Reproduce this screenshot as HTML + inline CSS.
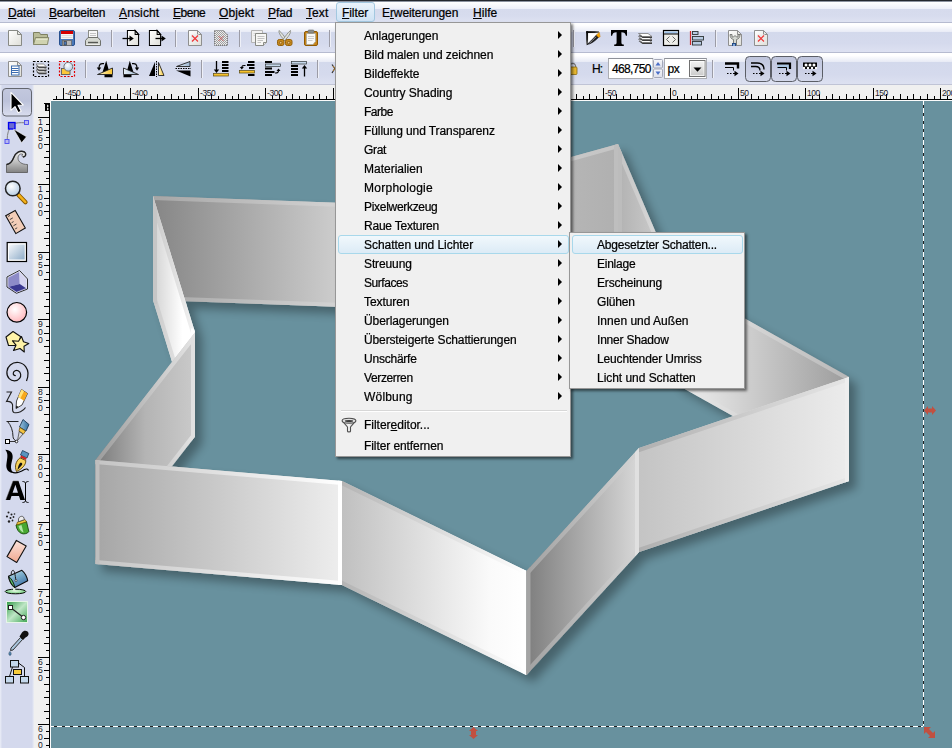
<!DOCTYPE html>
<html lang="de"><head><meta charset="utf-8"><title>Inkscape</title>
<style>
html,body{margin:0;padding:0;background:#dfe4f3;}
body{width:952px;height:748px;overflow:hidden;position:relative;font-family:"Liberation Sans",sans-serif;font-size:12px;color:#000;}
.t{position:absolute;white-space:nowrap;font-size:12px;line-height:16px;height:16px;color:#000;-webkit-text-stroke:.22px #000;}
.t u{text-decoration:underline;text-underline-offset:1px;}
.topline{position:absolute;left:0;top:0;width:952px;height:2px;background:linear-gradient(#23272e 0,#23272e 50%,#8c93a0 50%,#8c93a0 100%);}
.mb{position:absolute;left:0;top:2px;width:952px;height:20px;border-bottom:1px solid #b6bbd0;background:linear-gradient(#ffffff 0,#eef0f9 34%,#d6dbed 35%,#d7dcee 70%,#dee2f1 100%);}
.mbsel{position:absolute;left:336px;top:0;width:37px;height:18px;border:1px solid #a3c8e0;border-radius:3px;background:linear-gradient(#eaf3fb,#cfe2f4);}
.tb{position:absolute;left:0;width:952px;}
.tb1{top:23px;height:29px;border-bottom:1px solid #b6bbd0;background:linear-gradient(#ffffff 0,#ffffff 7%,#e8ebf6 31%,#d3d9ec 32%,#d5daed 70%,#dde1f1 100%);}
.tb2{top:53px;height:31px;border-bottom:1px solid #c0c4d6;background:linear-gradient(#ffffff 0,#ffffff 8%,#e8ebf6 28%,#d3d9ec 29%,#d5daed 70%,#dde1f1 100%);}
.tbx{position:absolute;left:0;top:85px;width:34px;height:663px;background:linear-gradient(90deg,#e9ecf7 0,#e2e6f3 1px,#d4d9ed 2px,#d4d9ed 32px,#e0e4f1 33px,#ebedf3 34px);}
.hr{position:absolute;left:34px;top:85px;}
.vr{position:absolute;left:34px;top:101px;}
.cv{position:absolute;left:51px;top:101px;}
.rl{font-family:"Liberation Sans",sans-serif;font-size:8.5px;letter-spacing:-.45px;fill:#1a1a2a;}
.menu{position:absolute;background:#f0f0f0;border:1px solid #979797;box-shadow:2px 2px 2.5px rgba(0,0,0,.52);}
.hl{position:absolute;border:1px solid #a8d8eb;border-radius:3px;background:linear-gradient(#f1f8fc,#dcebf6);}
.ar{position:absolute;width:0;height:0;border-left:4.5px solid #000;border-top:4px solid transparent;border-bottom:4px solid transparent;}
.sep{position:absolute;height:1px;background:#d7d7d7;border-bottom:1px solid #fff;}
.ic{position:absolute;}
</style></head>
<body>
<div class="topline"></div>
<div class="mb"><div class="mbsel"></div><span class="t" style="left:8px;top:3px;letter-spacing:-0.146px;"><u>D</u>atei</span><span class="t" style="left:49px;top:3px;letter-spacing:-0.176px;"><u>B</u>earbeiten</span><span class="t" style="left:119px;top:3px;letter-spacing:0.132px;"><u>A</u>nsicht</span><span class="t" style="left:173px;top:3px;letter-spacing:-0.484px;"><u>E</u>bene</span><span class="t" style="left:219px;top:3px;letter-spacing:0.099px;"><u>O</u>bjekt</span><span class="t" style="left:268px;top:3px;letter-spacing:-0.101px;"><u>P</u>fad</span><span class="t" style="left:306px;top:3px;letter-spacing:0.071px;"><u>T</u>ext</span><span class="t" style="left:342px;top:3px;letter-spacing:-0.065px;"><u>F</u>ilter</span><span class="t" style="left:382px;top:3px;letter-spacing:-0.085px;">E<u>r</u>weiterungen</span><span class="t" style="left:473px;top:3px;letter-spacing:0.057px;"><u>H</u>ilfe</span></div>
<div class="tb tb1"></div>
<div class="tb tb2"></div>
<div class="tbx"></div>
<svg class="ic" style="left:0;top:24px" width="952" height="61" viewBox="0 24 952 61"><defs>
<linearGradient id="dg" x1="0" y1="0" x2="1" y2="1"><stop offset="0" stop-color="#fff"/><stop offset="1" stop-color="#deded8"/></linearGradient>
<linearGradient id="fsg" x1="0" y1="0" x2="1" y2="1"><stop offset="0" stop-color="#fff"/><stop offset=".45" stop-color="#eee"/><stop offset=".75" stop-color="#555"/><stop offset="1" stop-color="#000"/></linearGradient>
<pattern id="chk" width="2" height="2" patternUnits="userSpaceOnUse"><rect width="2" height="2" fill="#ececec"/><rect width="1" height="1" fill="#a0a0a0"/><rect x="1" y="1" width="1" height="1" fill="#a0a0a0"/></pattern>
<g id="doc"><path d="M.5 .5H9.5L13.5 4.5V15.5H.5Z" fill="url(#dg)"/><path d="M9.5 .5V4.5H13.5Z" fill="#e6e6e2"/></g>
<g id="sep"><rect x="0" y="0" width="1" height="17" fill="#9c9ca6"/><rect x="1" y="0" width="1" height="17" fill="#eef0f8"/></g>
</defs>
<!-- new -->
<g transform="translate(8 30)"><use href="#doc" stroke="#888a85"/></g>
<!-- open -->
<path d="M33.5 44.5V32.5H39.5L40.5 34.5H47.5V38" fill="#b9bc98" stroke="#7d8061"/>
<path d="M33.5 44.5L35.5 37.5H48.7L47.5 44.5Z" fill="#d0d3b0" stroke="#86896a"/>
<path d="M36 39.5H47.5" stroke="#e2e4cc" stroke-width="1"/>
<!-- save -->
<rect x="59.5" y="30.5" width="15" height="15" rx="1.5" fill="#4a78b8" stroke="#27508f"/>
<rect x="61" y="31" width="12" height="3" fill="#d40000"/>
<rect x="61" y="34" width="12" height="5" fill="#f4f4f4"/>
<path d="M61.5 35.5H72.5M61.5 37.5H72.5" stroke="#d8d8d8" stroke-width=".8"/>
<rect x="62.5" y="40.5" width="9" height="5" fill="#b8b8b8" stroke="#6a6a6a" stroke-width=".8"/>
<rect x="64" y="41.5" width="2.5" height="3.5" fill="#4a78b8" stroke="#333" stroke-width=".6"/>
<!-- print -->
<rect x="88.5" y="30.5" width="9" height="8" fill="#f8f8f8" stroke="#8b8d88"/>
<path d="M90 33.5H96M90 35.5H96" stroke="#c4c4c4" stroke-width="1"/>
<path d="M85.500 45.500V40.5L88 37.5H98L100.500 40.5V45.500Z" fill="#d6d9d2" stroke="#6f716c"/>
<path d="M88 42.5H98" stroke="#555753" stroke-width="1.4"/>
<path d="M86.500 44.500H99.500" stroke="#f2f2f0" stroke-width=".8"/>
<use href="#sep" x="111" y="30"/>
<!-- import -->
<g transform="translate(127 30) scale(.857 1)"><use href="#doc" stroke="#000" stroke-width="1.2"/></g>
<path d="M122.500 38.500H131" stroke="#000" stroke-width="1.3"/><path d="M129.500 35.500L133.800 38.500L129.500 41.500Z" fill="#000"/>
<!-- export -->
<g transform="translate(149 30) scale(.857 1)"><use href="#doc" stroke="#000" stroke-width="1.2"/></g>
<path d="M155.500 38.500H163" stroke="#000" stroke-width="1.3"/><path d="M161.500 35.500L165.800 38.500L161.500 41.500Z" fill="#000"/>
<use href="#sep" x="175" y="30"/>
<!-- doc red x -->
<g transform="translate(188 30)"><use href="#doc" stroke="#8f8f8f"/><rect x="3" y="4.500" width="8" height="8" fill="#e9e9e9"/><path d="M4 5.500L10 11.500M10 5.500L4 11.500" stroke="#f03535" stroke-width="1.150"/></g>
<!-- dotted doc -->
<g transform="translate(214 30)"><path d="M.5 .5H9.5L13.500 4.500V15.500H.5Z" fill="url(#chk)" stroke="#6a6a6a" stroke-dasharray="1 1"/><path d="M4.500 6L9.500 11M9.500 6L4.500 11" stroke="#c44" stroke-width="1" opacity=".7"/></g>
<use href="#sep" x="239" y="30"/>
<!-- copy -->
<path d="M251.500 30.500H262.500V42.500H251.500Z" fill="#f1f1f1" stroke="#b4b4b4"/>
<path d="M253.500 33.500H260M253.500 35.500H260" stroke="#d6d6d6"/>
<path d="M255.500 33.500H266.500V42.500L263.500 45.500H255.500Z" fill="#f7f7f5" stroke="#888a85"/>
<path d="M257.500 36.500H264.500M257.500 38.500H264.500M257.500 40.500H263M257.500 42.500H261" stroke="#c2c2c2" stroke-width="1"/>
<path d="M266.500 42.500H263.500V45.500" fill="#ddd" stroke="#888a85"/>
<!-- scissors -->
<path d="M279 30.500C278.500 33 281 37 285.500 41L286.500 39.500C284 36 281.500 32.500 279 30.500Z" fill="#dfe1dc" stroke="#8a8c87" stroke-width=".9"/>
<path d="M290.500 30.500C291 33 288.500 37 284 41L283 39.500C285.500 36 288 32.500 290.500 30.500Z" fill="#dfe1dc" stroke="#8a8c87" stroke-width=".9"/>
<rect x="277.500" y="39.500" width="6.500" height="6" rx="1.800" fill="#c88a1c" stroke="#94600a"/>
<rect x="285.500" y="39.500" width="6.500" height="6" rx="1.800" fill="#c88a1c" stroke="#94600a"/>
<circle cx="280.700" cy="42.700" r="1.300" fill="#e9c07a" stroke="#7d4f05" stroke-width=".7"/>
<circle cx="288.700" cy="42.700" r="1.300" fill="#e9c07a" stroke="#7d4f05" stroke-width=".7"/>
<!-- clipboard -->
<rect x="304.500" y="31.500" width="13" height="14" rx="1.500" fill="#c8861a" stroke="#8f5902"/>
<path d="M306.500 33.500H315.500V41.500L313 44.500H306.500Z" fill="#f9f9f7" stroke="#a8a8a0" stroke-width=".8"/>
<path d="M308 36.500H314M308 38.500H314M308 40.500H312.500" stroke="#c6c6c6" stroke-width=".9"/>
<rect x="308" y="30" width="6" height="3" rx="1" fill="#8c8e89" stroke="#666" stroke-width=".6"/>
<use href="#sep" x="329" y="30"/>
<use href="#sep" x="573" y="30"/>
<!-- fill & stroke -->
<defs><linearGradient id="fs1" gradientUnits="userSpaceOnUse" x1="586" y1="0" x2="600" y2="0"><stop offset="0" stop-color="#000"/><stop offset=".6" stop-color="#222"/><stop offset="1" stop-color="#888"/></linearGradient>
<linearGradient id="fs2" gradientUnits="userSpaceOnUse" x1="0" y1="31" x2="0" y2="45"><stop offset="0" stop-color="#000"/><stop offset=".6" stop-color="#222"/><stop offset="1" stop-color="#888"/></linearGradient></defs>
<path d="M586.500 31.500H599.500L586.500 44.500Z" fill="#fff"/>
<path d="M586.300 32.100H599" stroke="url(#fs1)" stroke-width="1.900"/>
<path d="M587.100 31.300V44.500" stroke="url(#fs2)" stroke-width="1.900"/>
<path d="M586.800 44.600C589 43 592 40 596.500 35L598.800 37C594.500 41.500 591 44 586.800 44.600Z" fill="#222" stroke="#000" stroke-width=".6"/>
<path d="M589.500 43C591.500 41.500 593.500 39.500 596 36.800" fill="none" stroke="#9a9a9a" stroke-width=".9"/>
<path d="M596.300 35.200L599.300 32.200L600.200 36.800L598.600 37.400Z" fill="#f7a500" stroke="#c07000" stroke-width=".4"/>
<!-- T -->
<path d="M611 30H627V35.800H625.900C625.400 33.300 624.200 32.300 621.400 32.300V42.500C621.400 44 622.100 44.500 623.800 44.600V46H614.200V44.600C615.900 44.500 616.600 44 616.600 42.500V32.300C613.800 32.300 612.600 33.300 612.100 35.800H611Z" fill="#000"/>
<!-- layers -->
<path d="M638.5 41.1L642.5 44.1H652.0V42.5Z" fill="#3c3c3c"/><path d="M638.5 39.5H648.0L652.0 42.5H642.5Z" fill="#fdfdfd" stroke="#6a6a6a" stroke-width=".7"/><path d="M638.5 38.1L642.5 41.1H652.0V39.5Z" fill="#3c3c3c"/><path d="M638.5 36.5H648.0L652.0 39.5H642.5Z" fill="#fdfdfd" stroke="#6a6a6a" stroke-width=".7"/><path d="M638.5 35.1L642.5 38.1H652.0V36.5Z" fill="#3c3c3c"/><path d="M638.5 33.5H648.0L652.0 36.5H642.5Z" fill="#fdfdfd" stroke="#6a6a6a" stroke-width=".7"/>
<!-- xml -->
<rect x="663.500" y="30.500" width="15" height="15" fill="#eeeeea" stroke="#000" stroke-width="1.200"/>
<rect x="664.500" y="31.500" width="13" height="2" fill="#9cc0e8"/><path d="M664 34H678" stroke="#000" stroke-width="1"/>
<path d="M669.500 36.500L666.500 39.500L669.500 42.500M672.500 36.500L675.500 39.500L672.500 42.500" fill="none" stroke="#555" stroke-width=".9"/>
<!-- align -->
<path d="M690.500 31V45" stroke="#d02828" stroke-width="1.200"/>
<g fill="#b8cbe2" stroke="#2e3436" stroke-width=".9"><rect x="692.500" y="31.500" width="5.500" height="3"/><rect x="692.500" y="36.500" width="11" height="3.500"/><rect x="692.500" y="41.500" width="9" height="3.500"/></g>
<use href="#sep" x="715" y="30"/>
<!-- wrench doc -->
<g transform="translate(728 30)"><use href="#doc" stroke="#8f8f8f"/>
<path d="M2 4.500C2 7.500 3.500 9 5.500 9.500V15H8.500V9.500C10.500 9 12 7.500 12 4.500H10V7H8.500L7 5.500L5.500 7H4V4.500Z" fill="#d5d8d2" stroke="#70726e" stroke-width=".9"/>
<rect x="4" y="13" width="4" height="3" fill="#204a87"/><rect x="5.200" y="14" width="1.600" height="2" fill="#9bbbe6"/></g>
<!-- doc red x 2 -->
<g transform="translate(754 30)"><use href="#doc" stroke="#8f8f8f"/><rect x="3" y="4.500" width="8" height="8" fill="#e9e9e9"/><path d="M4 5.500L10 11.500M10 5.500L4 11.500" stroke="#f03535" stroke-width="1.150"/></g>
<defs>
<linearGradient id="yg" x1="0" y1="0" x2="1" y2="0"><stop offset="0" stop-color="#fff6c8"/><stop offset="1" stop-color="#f7c431"/></linearGradient>
<linearGradient id="bg2" x1="0" y1="0" x2="1" y2="0"><stop offset="0" stop-color="#e8f0f7"/><stop offset="1" stop-color="#9db7d3"/></linearGradient>
<linearGradient id="btn" x1="0" y1="0" x2="0" y2="1"><stop offset="0" stop-color="#bfc5dc"/><stop offset=".5" stop-color="#c9cee4"/><stop offset="1" stop-color="#d3d8ea"/></linearGradient>
<linearGradient id="ddb" x1="0" y1="0" x2="0" y2="1"><stop offset="0" stop-color="#f4f4f4"/><stop offset=".5" stop-color="#e0e0e0"/><stop offset="1" stop-color="#c8c8c8"/></linearGradient>
<radialGradient id="lens2" cx=".4" cy=".35" r=".7"><stop offset="0" stop-color="#fff"/><stop offset="1" stop-color="#b4cbe2"/></radialGradient><g id="sep2"><rect x="0" y="0" width="1" height="18" fill="#9c9ca6"/><rect x="1" y="0" width="1" height="18" fill="#eef0f8"/></g>
<g id="darr"><path d="M0 0H1.500M3 0H4.500M6 0H8" stroke="#000" stroke-width="1.200"/><path d="M7.500 -2.800L11.500 0L7.500 2.800Z" fill="#000"/></g>
</defs>
<!-- select all (doc blue lines) -->
<g transform="translate(8 61)"><path d="M.5 .5H9.500L13.500 4.500V15.500H.5Z" fill="url(#dg)" stroke="#8f8f8f"/><path d="M9.500 .5V4.500H13.500Z" fill="#e6e6e2" stroke="#8f8f8f"/>
<rect x="3.500" y="5" width="7.500" height="9" fill="#fff" stroke="#3b6cb0" stroke-width="1"/><path d="M4 7.500H10.500M4 9.500H10.500M4 11.500H10.500" stroke="#3b6cb0" stroke-width="1.100"/></g>
<!-- select all in all layers -->
<rect x="33.500" y="61.500" width="15" height="15" fill="none" stroke="#000" stroke-width="1.200" stroke-dasharray="2 1.500"/>
<path d="M36 71.5L39 74.3H46.5V72.8Z" fill="#3c3c3c"/><path d="M36 70H43.5L46.5 72.8H39Z" fill="#fdfdfd" stroke="#6a6a6a" stroke-width=".7"/><path d="M36 68.5L39 71.3H46.5V69.8Z" fill="#3c3c3c"/><path d="M36 67H43.5L46.5 69.8H39Z" fill="#fdfdfd" stroke="#6a6a6a" stroke-width=".7"/><path d="M36 65.5L39 68.3H46.5V66.8Z" fill="#3c3c3c"/><path d="M36 64H43.5L46.5 66.8H39Z" fill="#fdfdfd" stroke="#6a6a6a" stroke-width=".7"/>
<!-- deselect -->
<rect x="59.500" y="61.500" width="15" height="15" fill="none" stroke="#e00000" stroke-width="1.200" stroke-dasharray="2 1.500"/>
<rect x="61.500" y="68.500" width="8.500" height="6" fill="#fcc93a" stroke="#5c5c5c" stroke-width=".9"/>
<circle cx="68.300" cy="66.700" r="4.400" fill="url(#lens2)" stroke="#6a6a6a" stroke-width=".9"/>
<use href="#sep2" x="85" y="60"/>
<!-- rotate ccw -->
<path d="M106.200 60.800L110 74.500H112.500V77.300H104.500V74.500H101.800Z" fill="#000"/>
<path d="M97.500 74.500L112.500 68V74.500Z" fill="url(#yg)" stroke="#222" stroke-width=".9"/>
<path d="M104 63.700C100.500 63 99 64.500 99 68" fill="none" stroke="#000" stroke-width="1.200"/><path d="M96.800 67.500H101.200L99 70.800Z" fill="#000"/>
<!-- rotate cw -->
<path d="M129.800 60.800L126 74.500H123.500V77.300H131.500V74.500H134.200Z" fill="#000"/>
<path d="M138.500 74.500L123.500 68V74.500Z" fill="url(#bg2)" stroke="#222" stroke-width=".9"/>
<path d="M132 63.700C135.500 63 137 64.500 137 68" fill="none" stroke="#000" stroke-width="1.200"/><path d="M134.800 67.500H139.200L137 70.800Z" fill="#000"/>
<!-- flip h -->
<path d="M149 76L155 62V76Z" fill="#000"/>
<path d="M156.500 61V77" stroke="#000" stroke-width="1" stroke-dasharray="1.500 1"/>
<path d="M158.500 62.500L164 75.500H158.500Z" fill="url(#yg)" stroke="#222" stroke-width=".9"/>
<!-- flip v -->
<path d="M176.500 66.500L190 61.500V66.500Z" fill="url(#bg2)" stroke="#222" stroke-width=".9"/>
<path d="M175.500 68.500H191" stroke="#000" stroke-width="1" stroke-dasharray="1.500 1"/>
<path d="M176 70.500H190.500V76.500Z" fill="#000"/>
<use href="#sep2" x="201" y="60"/>
<!-- lower to bottom -->
<path d="M216.500 61V71" stroke="#000" stroke-width="1.300"/><path d="M213.800 69.500H219.200L216.500 73Z" fill="#000"/>
<path d="M222 62H228.500M222 65H228.500M222 68H228.500M222 71H228.500" stroke="#000" stroke-width="1.800"/>
<rect x="213.500" y="73.500" width="15" height="2.500" fill="#f6c12c" stroke="#5a4a10" stroke-width=".7"/>
<!-- lower -->
<path d="M248 62H254.500M247 65H254.500M249 68H254.500M248 75H254.500" stroke="#000" stroke-width="1.800"/>
<rect x="239.500" y="70.500" width="15" height="2.500" fill="#f6c12c" stroke="#5a4a10" stroke-width=".7"/>
<path d="M245.500 65.500C243 65.200 241.800 66 241.800 67.500" fill="none" stroke="#000" stroke-width="1.100"/><path d="M239.800 67H243.800L241.800 69.600Z" fill="#000"/>
<!-- raise -->
<path d="M265 62H272M265 68.500H272M265 72H274.500M265 75H272" stroke="#000" stroke-width="1.800"/>
<rect x="265.500" y="64" width="15" height="2.500" fill="#c4d6ea" stroke="#2e3436" stroke-width=".7"/>
<path d="M275 73C277.500 73.200 278.500 72.300 278.500 70.500" fill="none" stroke="#000" stroke-width="1.100"/><path d="M276.500 71H280.500L278.500 68.400Z" fill="#000"/>
<!-- raise to top -->
<rect x="291.500" y="61.500" width="15" height="2.500" fill="#c4d6ea" stroke="#2e3436" stroke-width=".7"/>
<path d="M291 66H298M291 69H298M291 72H298M291 75H298" stroke="#000" stroke-width="1.800"/>
<path d="M304.500 67V76.500" stroke="#000" stroke-width="1.300"/><path d="M301.800 68.500H307.200L304.500 65Z" fill="#000"/>
<use href="#sep2" x="317" y="60"/>
<path d="M332 64.500L334.800 68.500L332 73" fill="none" stroke="#333" stroke-width="1.200"/><path d="M333 66L335 68.500L333 71" fill="none" stroke="#d08a20" stroke-width=".8"/>
<!-- lock partial -->
<path d="M571 64C573.500 62.500 575.500 64 575.800 67" fill="none" stroke="#777" stroke-width="1.200"/>
<rect x="570" y="67" width="7" height="7.500" rx="1" fill="#e8b830" stroke="#8a6a10" stroke-width=".8"/>
<!-- H: input -->
<rect x="608.500" y="58.500" width="44.500" height="20" fill="#fff" stroke="#abadb3"/>
<path d="M608.500 58.500H653" stroke="#8e9199"/>
<!-- spinner -->
<rect x="653" y="58.500" width="10" height="20" fill="#eef0f6"/><defs><linearGradient id="spb" x1="0" y1="0" x2="0" y2="1"><stop offset="0" stop-color="#f8f8fb"/><stop offset="1" stop-color="#dcdfea"/></linearGradient></defs>
<rect x="653.500" y="59.500" width="9" height="8.500" rx="1" fill="url(#spb)" stroke="#a4a8b8" stroke-width="1"/>
<rect x="653.500" y="69" width="9" height="8.500" rx="1" fill="url(#spb)" stroke="#a4a8b8" stroke-width="1"/>
<path d="M655.500 65.500L658 62L660.500 65.500Z" fill="#4a6fc8"/><path d="M655.500 71.500L658 75L660.500 71.500Z" fill="#4a6fc8"/>
<!-- dropdown -->
<rect x="664.500" y="58.500" width="42" height="20" fill="#fff" stroke="#abadb3"/>
<path d="M664.500 58.500H706.500" stroke="#8e9199"/>
<rect x="689.500" y="60.500" width="15.500" height="16" fill="url(#ddb)" stroke="#707070"/>
<rect x="690.500" y="61.500" width="13.500" height="14" fill="none" stroke="#fff" stroke-opacity=".7"/>
<path d="M693.500 67.500H701.500L697.500 71.800Z" fill="#000"/>
<use href="#sep2" x="712" y="60"/>
<!-- toggle buttons -->
<rect x="745.500" y="56.500" width="25" height="25" rx="4" fill="url(#btn)" stroke="#5b5e66"/>
<rect x="771.500" y="56.500" width="25" height="25" rx="4" fill="url(#btn)" stroke="#5b5e66"/>
<rect x="797.500" y="56.500" width="25" height="25" rx="4" fill="url(#btn)" stroke="#5b5e66"/>
<!-- icon1 stroke scale -->
<path d="M725 63.500H738V68.500" fill="none" stroke="#000" stroke-width="2.400"/>
<path d="M725 67.500H733.500V70.500" fill="none" stroke="#000" stroke-width="1"/>
<use href="#darr" x="727" y="73.500"/>
<!-- icon2 rounded corners -->
<path d="M751 63H757C761.500 63 764 65 764 69.500" fill="none" stroke="#000" stroke-width="1.300"/>
<path d="M751 66.500H755.500C758.500 66.500 760 68 760 70.500" fill="none" stroke="#000" stroke-width="1.300"/>
<use href="#darr" x="753" y="73.500"/>
<!-- icon3 gradients -->
<path d="M777.500 64.500H789V68.500H777.500Z" fill="#a9c6e2"/>
<path d="M777 63.500H790V69" fill="none" stroke="#000" stroke-width="2.200"/>
<path d="M777.500 67.500H786.500V70.500" fill="none" stroke="#000" stroke-width="1"/>
<use href="#darr" x="779" y="73.500"/>
<!-- icon4 patterns -->
<rect x="803" y="62.500" width="14" height="6.500" fill="#000"/>
<g fill="#fff"><circle cx="806" cy="65" r="1.500"/><circle cx="810" cy="65" r="1.500"/><circle cx="814" cy="65" r="1.500"/><circle cx="804" cy="68" r="1.200"/><circle cx="808" cy="68" r="1.200"/><circle cx="812" cy="68" r="1.200"/><circle cx="816" cy="68" r="1.200"/></g>
<use href="#darr" x="805" y="73.500"/>
</svg>
<span class="t" style="left:592px;top:61px;letter-spacing:-0.850px;">H:</span>
<span class="t" style="left:612px;top:61px;letter-spacing:-0.656px;">468,750</span>
<span class="t" style="left:667.5px;top:61px;letter-spacing:-0.444px;">px</span>
<svg class="ic" style="left:0;top:85px" width="36" height="663" viewBox="0 85 36 663"><defs>
<linearGradient id="selg" x1="0" y1="0" x2="0" y2="1"><stop offset="0" stop-color="#c3c8de"/><stop offset=".45" stop-color="#bcc2da"/><stop offset="1" stop-color="#d9ddee"/></linearGradient>
<linearGradient id="twg" x1="0" y1="0" x2="0" y2="1"><stop offset="0" stop-color="#f0f0f0"/><stop offset=".5" stop-color="#c0c0c0"/><stop offset="1" stop-color="#828282"/></linearGradient>
<radialGradient id="lens" cx=".4" cy=".35" r=".7"><stop offset="0" stop-color="#fff"/><stop offset="1" stop-color="#b4cbe2"/></radialGradient>
<linearGradient id="rcg" x1="0" y1="0" x2="1" y2="1"><stop offset="0" stop-color="#f6f8fb"/><stop offset="1" stop-color="#8fadc9"/></linearGradient>
<radialGradient id="pink" cx=".4" cy=".35" r=".75"><stop offset="0" stop-color="#fff"/><stop offset="1" stop-color="#ffb0b6"/></radialGradient>
<linearGradient id="grn" x1="0" y1="0" x2="1" y2="1"><stop offset="0" stop-color="#2f9a45"/><stop offset=".5" stop-color="#bfe6c6"/><stop offset="1" stop-color="#3da652"/></linearGradient>
<linearGradient id="penb" x1="0" y1="0" x2="1" y2="0"><stop offset="0" stop-color="#9cc4e0"/><stop offset="1" stop-color="#2f6d9c"/></linearGradient>
<linearGradient id="era" x1="0" y1="0" x2="0" y2="1"><stop offset="0" stop-color="#fbe4dc"/><stop offset="1" stop-color="#f0a890"/></linearGradient>
</defs>
<!-- selected button -->
<rect x="2.500" y="88.500" width="29" height="27.500" rx="3.500" fill="url(#selg)" stroke="#63666e"/>
<path d="M11 92.300V110.300L15 106.600L18.200 112.800L21.200 111.300L18 105.300L23.200 105Z" fill="#000" stroke="#fff" stroke-width="1.100" stroke-linejoin="round"/>
<!-- node tool -->
<path d="M11.500 126C8.500 129 7.200 134 7.200 139.500M11.500 124.500C16 122.500 21 122.500 24.500 122.800" fill="none" stroke="#808080" stroke-width="1"/>
<rect x="8.500" y="122.500" width="6.500" height="6.500" fill="#6a6ad0" stroke="#0000f0" stroke-width="1.300"/>
<rect x="24.500" y="120.500" width="4" height="4" fill="#b8b8f0" stroke="#4a4af0" stroke-width=".9"/>
<rect x="5" y="139.500" width="4" height="4" fill="#b8b8f0" stroke="#4a4af0" stroke-width=".9"/>
<path d="M13.500 129L26.500 136.800L21.600 142.800Z" fill="#000" stroke="#fff" stroke-width=".6"/>
<!-- tweak -->
<path d="M6.500 172.500V164.500C10 164 12 162 13.500 158C15.500 152.500 20 150 24.500 152C26.500 153.500 26 157 23 157C21.500 156.500 21.800 154.500 23 154.500C20.500 153 18 155 18 158C18 162 22 164.500 27.500 164.500V172.500Z" fill="url(#twg)" stroke="#555" stroke-width=".8"/>
<path d="M6.500 164.500C10 164 12 162 13.500 158C15.500 152.500 20 150 24.500 152C26.500 153.500 26 157 23 157" fill="none" stroke="#222" stroke-width="1.400"/>
<!-- zoom -->
<path d="M18.500 195L25.500 202.300" stroke="#8a5a00" stroke-width="4.300" stroke-linecap="round"/>
<path d="M18.800 195.200L25.300 202" stroke="#f5b21a" stroke-width="2.500" stroke-linecap="round"/>
<circle cx="12.800" cy="188.500" r="7.300" fill="url(#lens)" stroke="#222" stroke-width="1.500"/>
<!-- measure -->
<path d="M5.700 215.700L15.200 210.500L25.300 228L15.800 233.600Z" fill="#f2cdb8" stroke="#111" stroke-width="1.100"/>
<path d="M8 216.500L10 215.400M9.800 219.600L12.800 217.900M11.600 222.700L13.600 221.600M13.400 225.800L16.400 224.100M15.200 228.900L17.200 227.800" stroke="#333" stroke-width=".9"/>
<!-- rect -->
<rect x="7.200" y="242.500" width="19.300" height="19" fill="#fff" stroke="#000" stroke-width="1.200"/>
<rect x="9" y="244.500" width="15.700" height="15" fill="url(#rcg)"/>
<!-- 3d box -->
<path d="M7 277L19.500 270.500L27.500 279V289L16.500 293.300L7 287Z" fill="#e4e4f6" stroke="#2a2a2a" stroke-width="1" stroke-linejoin="round"/>
<path d="M8 277.500L19.300 271.700L19.800 284L8 287Z" fill="#8d8bc8"/>
<path d="M19.300 271.700L26.500 279.300V288.500L19.800 284Z" fill="#d5d4f0"/>
<path d="M8 287L19.800 284L26.500 288.500L16.500 292.300Z" fill="#3a3890"/>
<path d="M7 277L19.500 270.500L27.500 279V289L16.500 293.300L7 287Z" fill="none" stroke="#e8e8f4" stroke-width=".8" transform="translate(17.200 282) scale(.9) translate(-17.200 -282)" opacity=".7"/>
<!-- circle -->
<circle cx="16.800" cy="312.300" r="9.800" fill="url(#pink)" stroke="#000" stroke-width="1.200"/>
<!-- star/polygon -->
<path d="M13 331.500L20.500 336.500L18.500 345.500L8.500 345.500L6 337Z" fill="#fff3a8" stroke="#111" stroke-width="1.100" stroke-linejoin="round"/>
<path d="M21.500 336.500L23.500 341.800L28.800 343.500L24 346.200L24.300 352L20 348.500L13.500 350.500L16 345.200L12.500 340.800L18.500 341.200Z" fill="#fff3a8" stroke="#111" stroke-width="1.100" stroke-linejoin="round"/>
<!-- spiral -->
<path d="M15.800 375.500C14.300 376 13 374.600 13.300 373C13.700 370.800 16.200 369.800 18.200 370.800C21 372.200 21.500 376 19.600 378.400C17 381.700 12 381.600 9.200 378.600C5.700 374.800 6.200 368.500 10.300 365C15 361 22.200 361.800 25.800 366.800C28.500 370.500 28.300 376.500 26.500 381" fill="none" stroke="#111" stroke-width="1.200"/>
<!-- pencil -->
<path d="M6.500 392H11.500L6.500 401.500C9 401.200 11.500 401.800 12.500 404.500C13 408 11.500 411.500 14 412.500C18 413.500 23.500 411 25.500 407.500" fill="none" stroke="#222" stroke-width="1.100"/>
<path d="M21.500 389.500L27.500 393.500L22 405L16 408.500L16.500 401Z" fill="#fff" stroke="#333" stroke-width=".9"/>
<path d="M21.500 389.500L27.500 393.500L24 400.800L18.300 397Z" fill="#f7a81c"/>
<path d="M21.500 389.500L24 391.200L20.300 398.400L18.300 397Z" fill="#ffe37a"/>
<path d="M16 408.500L16.300 405.500L18.500 407Z" fill="#111"/>
<!-- pen (bezier) -->
<path d="M6.500 421.500H18.500M7.500 421.500C11 425 13 431 13 436.500C13 438.500 14.500 440.500 16.500 441" fill="none" stroke="#222" stroke-width="1"/>
<path d="M9.500 441.500H16.500" stroke="#222" stroke-width=".9"/>
<rect x="5.500" y="439.500" width="4" height="4" fill="#fff" stroke="#000" stroke-width="1"/>
<circle cx="16.500" cy="441.500" r="1.300" fill="#fff" stroke="#000" stroke-width=".8"/>
<path d="M23 419.500L29 424.500L26 431L19.500 427Z" fill="url(#penb)" stroke="#1c3a54" stroke-width=".9"/>
<path d="M19.800 427.500L25.500 431L23.500 434L19 431.200Z" fill="#f3c342" stroke="#6a4a00" stroke-width=".7"/>
<path d="M19.200 431.500L23 434L17.500 440.500Z" fill="#d8d8d8" stroke="#333" stroke-width=".7"/>
<!-- calligraphy -->
<path d="M5.300 449.800C10.500 450 13.500 453.500 12.500 458.500C11.500 463.500 9.500 468 13 472.800C8.500 473 5.500 469 6.500 463.500C7.300 458 8.500 453.500 5.300 449.800Z" fill="#000"/>
<path d="M12 472C16 474.500 22 471 24.500 469.500C26.500 468.500 28 469 28.500 470.500" fill="none" stroke="#000" stroke-width="1.100"/>
<path d="M22.500 450.500L28.800 453.500L27 458L20.500 455Z" fill="#5b93bf" stroke="#1c3a54" stroke-width=".8"/>
<path d="M21 455.500L26.500 458L26 460L20.300 457.500Z" fill="#d42020"/>
<path d="M20 457.800L25.800 460.500C26 465 22 469 16.500 471.500C14.500 466.500 15.500 461.500 20 457.800Z" fill="#f7d25a" stroke="#5a4000" stroke-width=".9"/>
<path d="M20.800 462.500C22.500 463 22.800 464.500 21.500 465.500L17.500 470C18 466.500 19 463.500 20.800 462.500Z" fill="#111"/>
<!-- text A -->
<path d="M5.800 500L13 481H18.500L25 500H20.300L19 496H11.500L10.200 500ZM12.600 492.800H18L15.400 484.800Z" fill="#000"/>
<path d="M5.800 500L13 481H18.500" fill="none" stroke="#666" stroke-width=".5"/>
<path d="M22.500 481.500C24 481.500 25 482 25.500 483C26 482 27 481.500 28.500 481.500M25.500 483V501M22.500 502.500C24 502.500 25 502 25.500 501C26 502 27 502.500 28.500 502.500" fill="none" stroke="#000" stroke-width="1"/>
<!-- spray -->
<g fill="#222"><circle cx="8.500" cy="512.500" r="1"/><circle cx="11.500" cy="514.500" r="1"/><circle cx="7" cy="516.500" r="1.100"/><circle cx="10.500" cy="518" r="1"/><circle cx="13.500" cy="517" r=".9"/><circle cx="9" cy="521.500" r="1.200"/><circle cx="12.500" cy="520.500" r=".9"/><circle cx="14.500" cy="514" r=".8"/></g>
<path d="M16 525L26.500 521.500L28.800 531.500C28 533.500 24 534.500 21.500 533.500C19 532.500 16.500 529.500 16 525Z" fill="#48a832" stroke="#1a4a10" stroke-width=".9"/>
<path d="M18.500 526L21.500 525L23.500 532.500C21.500 532 19.500 530 18.500 526Z" fill="#b4e8a8"/>
<path d="M17.500 522L25 519.500L26.500 521.800L16.500 525Z" fill="#f0c840" stroke="#6a5000" stroke-width=".7"/>
<path d="M18.500 519C19 516.500 22 515.500 23.500 517L24.500 519.600L18.500 521.800Z" fill="#ececec" stroke="#444" stroke-width=".8"/>
<!-- eraser -->
<path d="M16.400 540.400L26.200 546L16.700 562.500L7 556.600Z" fill="url(#era)" stroke="#111" stroke-width="1.100" stroke-linejoin="round"/>
<!-- bucket -->
<defs><linearGradient id="bkt" x1="0" y1="0" x2=".6" y2="1"><stop offset="0" stop-color="#d4edf2"/><stop offset=".45" stop-color="#7fb0cc"/><stop offset="1" stop-color="#3f74a8"/></linearGradient>
<radialGradient id="pud" cx=".5" cy=".4" r=".6"><stop offset="0" stop-color="#e4f8e4"/><stop offset="1" stop-color="#63c870"/></radialGradient></defs>
<ellipse cx="15.500" cy="591.500" rx="10.300" ry="2.300" fill="url(#pud)" stroke="#0c0c0c" stroke-width="1"/>
<path d="M12.800 586.500C13.500 588 13.200 589.500 12.500 590.800H16C14.800 589.500 14.500 588.200 14.800 586.800Z" fill="#dff4df"/>
<path d="M8.500 576.300L21.900 570.300C24.500 572.500 27 577 27.700 580.700L14.800 587.500C11.500 585 9.200 580.500 8.500 576.300Z" fill="url(#bkt)" stroke="#0c0c0c" stroke-width="1.100" stroke-linejoin="round"/>
<path d="M8.700 576.500C11.500 578.500 14 583 14.800 587.300C11.800 585.500 9.300 580.800 8.700 576.500Z" fill="#5cc468" stroke="#0c0c0c" stroke-width=".9"/>
<path d="M11.200 574.800C11 571.800 12.300 570 13.300 570.300C14.500 571 15.200 575 15.800 580" fill="none" stroke="#1a1a1a" stroke-width="1"/>
<circle cx="16" cy="580.500" r="1.100" fill="#cfcfcf" stroke="#333" stroke-width=".6"/>
<!-- gradient -->
<rect x="6.500" y="601.500" width="21" height="21" fill="url(#grn)" stroke="#e6f4e8" stroke-width="1"/>
<path d="M10.500 607.500L23.500 617.500" stroke="#222" stroke-width="1.200"/>
<rect x="8.500" y="605.500" width="4" height="4" fill="#fff" stroke="#222" stroke-width="1"/>
<circle cx="23.500" cy="617.500" r="2.200" fill="#fff" stroke="#222" stroke-width="1"/>
<!-- dropper -->
<path d="M22 632.500C24 630 27.500 630.500 28.500 633C29 635 27.500 637 25.500 637.500L23 640L19.500 636.500Z" fill="#111"/>
<path d="M20.500 637.500L22.500 639.500L13 650L10.500 650.500L11 648Z" fill="#a9c4dc" stroke="#222" stroke-width=".9"/>
<path d="M10 651.500C11.500 653 11.500 655 10 655.500C8.500 655 8.500 653 10 651.500Z" fill="#5b93bf" stroke="#1c3a54" stroke-width=".6"/>
<!-- connector -->
<path d="M12.500 667L9.500 676.500M18.500 663L24.500 667.500V676.500" fill="none" stroke="#111" stroke-width="1"/>
<rect x="10.500" y="660.500" width="8" height="6.500" fill="#c4d8ec" stroke="#111" stroke-width="1"/>
<rect x="13.500" y="669.500" width="8" height="5" fill="#f8cc3c" stroke="#111" stroke-width="1"/>
<rect x="5.500" y="676.500" width="8" height="6.500" fill="#c4d8ec" stroke="#111" stroke-width="1"/>
<rect x="20.500" y="676.500" width="8" height="6.500" fill="#c4d8ec" stroke="#111" stroke-width="1"/>
</svg>
<svg class="hr" width="918" height="16" viewBox="34 85 918 16"><rect x="34" y="85" width="918" height="16" fill="#f0f0f0"/><rect x="53" y="99" width="899" height="1" fill="#000"/><rect x="51" y="100" width="901" height="1" fill="#fbfbfb"/><path d="M56.5 96V99 M63.5 88V99 M70.5 96V99 M76.5 94V99 M83.5 96V99 M90.5 94V99 M97.5 96V99 M103.5 94V99 M110.5 96V99 M117.5 94V99 M124.5 96V99 M130.5 88V99 M137.5 96V99 M144.5 94V99 M151.5 96V99 M157.5 94V99 M164.5 96V99 M171.5 94V99 M178.5 96V99 M184.5 94V99 M191.5 96V99 M198.5 88V99 M205.5 96V99 M211.5 94V99 M218.5 96V99 M225.5 94V99 M232.5 96V99 M238.5 94V99 M245.5 96V99 M252.5 94V99 M259.5 96V99 M265.5 88V99 M272.5 96V99 M279.5 94V99 M286.5 96V99 M292.5 94V99 M299.5 96V99 M306.5 94V99 M313.5 96V99 M319.5 94V99 M326.5 96V99 M333.5 88V99 M340.5 96V99 M346.5 94V99 M353.5 96V99 M360.5 94V99 M367.5 96V99 M373.5 94V99 M380.5 96V99 M387.5 94V99 M394.5 96V99 M400.5 88V99 M407.5 96V99 M414.5 94V99 M421.5 96V99 M427.5 94V99 M434.5 96V99 M441.5 94V99 M448.5 96V99 M454.5 94V99 M461.5 96V99 M468.5 88V99 M475.5 96V99 M481.5 94V99 M488.5 96V99 M495.5 94V99 M502.5 96V99 M508.5 94V99 M515.5 96V99 M522.5 94V99 M529.5 96V99 M535.5 88V99 M542.5 96V99 M549.5 94V99 M556.5 96V99 M562.5 94V99 M569.5 96V99 M576.5 94V99 M583.5 96V99 M589.5 94V99 M596.5 96V99 M603.5 88V99 M610.5 96V99 M616.5 94V99 M623.5 96V99 M630.5 94V99 M637.5 96V99 M643.5 94V99 M650.5 96V99 M657.5 94V99 M664.5 96V99 M670.5 88V99 M677.5 96V99 M684.5 94V99 M691.5 96V99 M697.5 94V99 M704.5 96V99 M711.5 94V99 M718.5 96V99 M724.5 94V99 M731.5 96V99 M738.5 88V99 M745.5 96V99 M751.5 94V99 M758.5 96V99 M765.5 94V99 M772.5 96V99 M778.5 94V99 M785.5 96V99 M792.5 94V99 M799.5 96V99 M805.5 88V99 M812.5 96V99 M819.5 94V99 M826.5 96V99 M832.5 94V99 M839.5 96V99 M846.5 94V99 M853.5 96V99 M859.5 94V99 M866.5 96V99 M873.5 88V99 M880.5 96V99 M886.5 94V99 M893.5 96V99 M900.5 94V99 M907.5 96V99 M913.5 94V99 M920.5 96V99 M927.5 94V99 M934.5 96V99 M940.5 88V99 M947.5 96V99" stroke="#000" stroke-width="1" fill="none" shape-rendering="crispEdges"/><text x="65" y="96" class="rl">-450</text><text x="132" y="96" class="rl">-400</text><text x="200" y="96" class="rl">-350</text><text x="267" y="96" class="rl">-300</text><text x="335" y="96" class="rl">-250</text><text x="402" y="96" class="rl">-200</text><text x="470" y="96" class="rl">-150</text><text x="537" y="96" class="rl">-100</text><text x="605" y="96" class="rl">-50</text><text x="672" y="96" class="rl">0</text><text x="740" y="96" class="rl">50</text><text x="807" y="96" class="rl">100</text><text x="875" y="96" class="rl">150</text><text x="942" y="96" class="rl">200</text></svg>
<svg class="vr" width="17" height="647" viewBox="34 101 17 647"><rect x="34" y="101" width="17" height="647" fill="#f0f0f0"/><rect x="49" y="103" width="1" height="645" fill="#000"/><rect x="50" y="101" width="1" height="647" fill="#fbfbfb"/><path d="M38 117.5H49 M46 124.5H49 M44 130.5H49 M46 137.5H49 M44 144.5H49 M46 151.5H49 M44 157.5H49 M46 164.5H49 M44 171.5H49 M46 178.5H49 M38 184.5H49 M46 191.5H49 M44 198.5H49 M46 205.5H49 M44 211.5H49 M46 218.5H49 M44 225.5H49 M46 232.5H49 M44 238.5H49 M46 245.5H49 M38 252.5H49 M46 259.5H49 M44 265.5H49 M46 272.5H49 M44 279.5H49 M46 286.5H49 M44 292.5H49 M46 299.5H49 M44 306.5H49 M46 313.5H49 M38 319.5H49 M46 326.5H49 M44 333.5H49 M46 340.5H49 M44 346.5H49 M46 353.5H49 M44 360.5H49 M46 367.5H49 M44 373.5H49 M46 380.5H49 M38 387.5H49 M46 394.5H49 M44 400.5H49 M46 407.5H49 M44 414.5H49 M46 421.5H49 M44 427.5H49 M46 434.5H49 M44 441.5H49 M46 448.5H49 M38 454.5H49 M46 461.5H49 M44 468.5H49 M46 475.5H49 M44 481.5H49 M46 488.5H49 M44 495.5H49 M46 502.5H49 M44 508.5H49 M46 515.5H49 M38 522.5H49 M46 529.5H49 M44 535.5H49 M46 542.5H49 M44 549.5H49 M46 556.5H49 M44 562.5H49 M46 569.5H49 M44 576.5H49 M46 583.5H49 M38 589.5H49 M46 596.5H49 M44 603.5H49 M46 610.5H49 M44 616.5H49 M46 623.5H49 M44 630.5H49 M46 637.5H49 M44 643.5H49 M46 650.5H49 M38 657.5H49 M46 664.5H49 M44 670.5H49 M46 677.5H49 M44 684.5H49 M46 691.5H49 M44 697.5H49 M46 704.5H49 M44 711.5H49 M46 718.5H49 M38 724.5H49 M46 731.5H49 M44 738.5H49 M46 745.5H49" stroke="#000" stroke-width="1" fill="none" shape-rendering="crispEdges"/><text x="38" y="124.6" class="rl" style="font-size:8.6px">1</text><text x="38" y="132.7" class="rl" style="font-size:8.6px">0</text><text x="38" y="140.8" class="rl" style="font-size:8.6px">5</text><text x="38" y="148.9" class="rl" style="font-size:8.6px">0</text><text x="38" y="191.6" class="rl" style="font-size:8.6px">1</text><text x="38" y="199.7" class="rl" style="font-size:8.6px">0</text><text x="38" y="207.8" class="rl" style="font-size:8.6px">0</text><text x="38" y="215.9" class="rl" style="font-size:8.6px">0</text><text x="38" y="259.6" class="rl" style="font-size:8.6px">9</text><text x="38" y="267.7" class="rl" style="font-size:8.6px">5</text><text x="38" y="275.8" class="rl" style="font-size:8.6px">0</text><text x="38" y="326.6" class="rl" style="font-size:8.6px">9</text><text x="38" y="334.7" class="rl" style="font-size:8.6px">0</text><text x="38" y="342.8" class="rl" style="font-size:8.6px">0</text><text x="38" y="394.6" class="rl" style="font-size:8.6px">8</text><text x="38" y="402.7" class="rl" style="font-size:8.6px">5</text><text x="38" y="410.8" class="rl" style="font-size:8.6px">0</text><text x="38" y="461.6" class="rl" style="font-size:8.6px">8</text><text x="38" y="469.7" class="rl" style="font-size:8.6px">0</text><text x="38" y="477.8" class="rl" style="font-size:8.6px">0</text><text x="38" y="529.6" class="rl" style="font-size:8.6px">7</text><text x="38" y="537.7" class="rl" style="font-size:8.6px">5</text><text x="38" y="545.8" class="rl" style="font-size:8.6px">0</text><text x="38" y="596.6" class="rl" style="font-size:8.6px">7</text><text x="38" y="604.7" class="rl" style="font-size:8.6px">0</text><text x="38" y="612.8" class="rl" style="font-size:8.6px">0</text><text x="38" y="664.6" class="rl" style="font-size:8.6px">6</text><text x="38" y="672.7" class="rl" style="font-size:8.6px">5</text><text x="38" y="680.8" class="rl" style="font-size:8.6px">0</text><text x="38" y="731.6" class="rl" style="font-size:8.6px">6</text><text x="38" y="739.7" class="rl" style="font-size:8.6px">0</text><text x="38" y="747.8" class="rl" style="font-size:8.6px">0</text><rect x="45" y="103" width="5" height="8" fill="#000"/><rect x="44" y="103" width="2" height="1" fill="#000"/><path d="M47 104.5L49 106L47 107.500ZM47 107.5L49 109L47 110.500Z" fill="#ddd"/></svg>
<svg class="cv" width="901" height="647" viewBox="51 101 901 647"><defs><linearGradient id="gJ" gradientUnits="userSpaceOnUse" x1="398" y1="0" x2="618" y2="0"><stop offset="0" stop-color="#c9c9c9"/><stop offset="1" stop-color="#b0b0b0"/></linearGradient><linearGradient id="sJ" gradientUnits="userSpaceOnUse" x1="398" y1="0" x2="618" y2="0"><stop offset="0" stop-color="#d4d4d4"/><stop offset="1" stop-color="#c4c4c4"/></linearGradient><clipPath id="cJ"><polygon points="398,205 618,144 618,248 398,309"/></clipPath><linearGradient id="gA" gradientUnits="userSpaceOnUse" x1="153" y1="0" x2="398" y2="0"><stop offset="0" stop-color="#868686"/><stop offset="1" stop-color="#e4e4e4"/></linearGradient><linearGradient id="sA" gradientUnits="userSpaceOnUse" x1="153" y1="0" x2="398" y2="0"><stop offset="0" stop-color="#a6a6a6"/><stop offset="1" stop-color="#e2e2e2"/></linearGradient><clipPath id="cA"><polygon points="153,196 398,205 398,309 153,300"/></clipPath><linearGradient id="gI" gradientUnits="userSpaceOnUse" x1="618" y1="0" x2="676" y2="0"><stop offset="0" stop-color="#b2b2b2"/><stop offset="1" stop-color="#d6d6d6"/></linearGradient><linearGradient id="sI" gradientUnits="userSpaceOnUse" x1="618" y1="0" x2="676" y2="0"><stop offset="0" stop-color="#c4c4c4"/><stop offset="1" stop-color="#e2e2e2"/></linearGradient><clipPath id="cI"><polygon points="618,144 676,280 676,384 618,248"/></clipPath><linearGradient id="gH" gradientUnits="userSpaceOnUse" x1="676" y1="0" x2="849" y2="0"><stop offset="0" stop-color="#f2f2f2"/><stop offset="1" stop-color="#9c9c9c"/></linearGradient><linearGradient id="sH" gradientUnits="userSpaceOnUse" x1="676" y1="0" x2="849" y2="0"><stop offset="0" stop-color="#ececec"/><stop offset="1" stop-color="#b8b8b8"/></linearGradient><clipPath id="cH"><polygon points="676,280 849,377 849,481 676,384"/></clipPath><linearGradient id="gB" gradientUnits="userSpaceOnUse" x1="153" y1="0" x2="195" y2="0"><stop offset="0" stop-color="#d2d2d2"/><stop offset="0.7" stop-color="#ffffff"/><stop offset="1" stop-color="#ffffff"/></linearGradient><linearGradient id="sB" gradientUnits="userSpaceOnUse" x1="153" y1="0" x2="195" y2="0"><stop offset="0" stop-color="#c8c8c8"/><stop offset="1" stop-color="#f4f4f4"/></linearGradient><clipPath id="cB"><polygon points="153,196 195,332.5 195,436.5 153,300"/></clipPath><linearGradient id="gC" gradientUnits="userSpaceOnUse" x1="95.5" y1="0" x2="195" y2="0"><stop offset="0" stop-color="#7a7a7a"/><stop offset="0.5" stop-color="#b4b4b4"/><stop offset="1" stop-color="#cacaca"/></linearGradient><linearGradient id="sC" gradientUnits="userSpaceOnUse" x1="95.5" y1="0" x2="195" y2="0"><stop offset="0" stop-color="#9c9c9c"/><stop offset="1" stop-color="#e4e4e4"/></linearGradient><clipPath id="cC"><polygon points="95.5,460 195,332.5 195,436.5 95.5,564"/></clipPath><linearGradient id="gD" gradientUnits="userSpaceOnUse" x1="95.5" y1="0" x2="342" y2="0"><stop offset="0" stop-color="#a6a6a6"/><stop offset="1" stop-color="#eeeeee"/></linearGradient><linearGradient id="sD" gradientUnits="userSpaceOnUse" x1="95.5" y1="0" x2="342" y2="0"><stop offset="0" stop-color="#c4c4c4"/><stop offset="1" stop-color="#ffffff"/></linearGradient><clipPath id="cD"><polygon points="95.5,460 342,481 342,585 95.5,564"/></clipPath><linearGradient id="gE" gradientUnits="userSpaceOnUse" x1="342" y1="0" x2="526.5" y2="0"><stop offset="0" stop-color="#c0c0c0"/><stop offset="0.8" stop-color="#fafafa"/><stop offset="1" stop-color="#ffffff"/></linearGradient><linearGradient id="sE" gradientUnits="userSpaceOnUse" x1="342" y1="0" x2="526.5" y2="0"><stop offset="0" stop-color="#b4b4b4"/><stop offset="1" stop-color="#ffffff"/></linearGradient><clipPath id="cE"><polygon points="342,481 526.5,571 526.5,675 342,585"/></clipPath><linearGradient id="gF" gradientUnits="userSpaceOnUse" x1="526.5" y1="0" x2="639" y2="0"><stop offset="0" stop-color="#7e7e7e"/><stop offset="1" stop-color="#d8d8d8"/></linearGradient><linearGradient id="sF" gradientUnits="userSpaceOnUse" x1="526.5" y1="0" x2="639" y2="0"><stop offset="0" stop-color="#a2a2a2"/><stop offset="1" stop-color="#d4d4d4"/></linearGradient><clipPath id="cF"><polygon points="526.5,571 639,448 639,552 526.5,675"/></clipPath><linearGradient id="gG" gradientUnits="userSpaceOnUse" x1="639" y1="0" x2="849" y2="0"><stop offset="0" stop-color="#c4c4c4"/><stop offset="1" stop-color="#ececec"/></linearGradient><linearGradient id="sG" gradientUnits="userSpaceOnUse" x1="639" y1="0" x2="849" y2="0"><stop offset="0" stop-color="#b0b0b0"/><stop offset="1" stop-color="#e6e6e6"/></linearGradient><clipPath id="cG"><polygon points="639,448 849,377 849,481 639,552"/></clipPath><filter id="ds" x="-10%" y="-10%" width="125%" height="125%"><feGaussianBlur in="SourceAlpha" stdDeviation="5"/><feOffset dx="6.5" dy="6.5"/><feComponentTransfer><feFuncA type="linear" slope=".32"/></feComponentTransfer><feMerge><feMergeNode/><feMergeNode in="SourceGraphic"/></feMerge></filter></defs><rect x="51" y="100" width="901" height="648" fill="#68919e"/><g filter="url(#ds)"><polygon points="398,205 618,144 618,248 398,309" fill="url(#gJ)"/><g clip-path="url(#cJ)" fill="none" stroke-width="8" stroke-linecap="square"><path d="M398 205L618 144M398 309L618 248" stroke="url(#sJ)"/><path d="M618 144V248" stroke="#bebebe"/></g><polygon points="153,196 398,205 398,309 153,300" fill="url(#gA)"/><g clip-path="url(#cA)" fill="none" stroke-width="8" stroke-linecap="square"><path d="M153 196L398 205M153 300L398 309" stroke="url(#sA)"/></g><polygon points="618,144 676,280 676,384 618,248" fill="url(#gI)"/><g clip-path="url(#cI)" fill="none" stroke-width="8" stroke-linecap="square"><path d="M618 144L676 280M618 248L676 384" stroke="url(#sI)"/><path d="M618 144V248" stroke="#bcbcbc"/></g><polygon points="676,280 849,377 849,481 676,384" fill="url(#gH)"/><g clip-path="url(#cH)" fill="none" stroke-width="8" stroke-linecap="square"><path d="M676 280L849 377M676 384L849 481" stroke="url(#sH)"/></g><polygon points="153,196 195,332.5 195,436.5 153,300" fill="url(#gB)"/><g clip-path="url(#cB)" fill="none" stroke-width="8" stroke-linecap="square"><path d="M153 196L195 332.5M153 300L195 436.5" stroke="url(#sB)"/><path d="M153 196V300" stroke="#c6c6c6"/><path d="M195 332.5V436.5" stroke="#ffffff"/></g><polygon points="95.5,460 195,332.5 195,436.5 95.5,564" fill="url(#gC)"/><g clip-path="url(#cC)" fill="none" stroke-width="8" stroke-linecap="square"><path d="M95.5 460L195 332.5M95.5 564L195 436.5" stroke="url(#sC)"/><path d="M195 332.5V436.5" stroke="#e0e0e0"/></g><polygon points="95.5,460 342,481 342,585 95.5,564" fill="url(#gD)"/><g clip-path="url(#cD)" fill="none" stroke-width="8" stroke-linecap="square"><path d="M95.5 460L342 481M95.5 564L342 585" stroke="url(#sD)"/><path d="M95.5 460V564" stroke="#bebebe"/><path d="M342 481V585" stroke="#ffffff"/></g><polygon points="342,481 526.5,571 526.5,675 342,585" fill="url(#gE)"/><g clip-path="url(#cE)" fill="none" stroke-width="8" stroke-linecap="square"><path d="M342 481L526.5 571M342 585L526.5 675" stroke="url(#sE)"/><path d="M526.5 571V675" stroke="#ffffff"/></g><polygon points="526.5,571 639,448 639,552 526.5,675" fill="url(#gF)"/><g clip-path="url(#cF)" fill="none" stroke-width="8" stroke-linecap="square"><path d="M526.5 571L639 448M526.5 675L639 552" stroke="url(#sF)"/><path d="M526.5 571V675" stroke="#a4a4a4"/><path d="M639 448V552" stroke="#e0e0e0"/></g><polygon points="639,448 849,377 849,481 639,552" fill="url(#gG)"/><g clip-path="url(#cG)" fill="none" stroke-width="8" stroke-linecap="square"><path d="M639 448L849 377M639 552L849 481" stroke="url(#sG)"/><path d="M849 377V481" stroke="#eeeeee"/></g></g><path d="M51 726.5H923 M923.5 101V726" stroke="#fff" stroke-width="1" fill="none" shape-rendering="crispEdges"/><path d="M51 726.5H923" stroke="#222" stroke-width="1" stroke-dasharray="3 5" stroke-dashoffset="5" fill="none" shape-rendering="crispEdges"/><path d="M923.5 101V726" stroke="#222" stroke-width="1" stroke-dasharray="3 5" stroke-dashoffset="4.2" fill="none" shape-rendering="crispEdges"/><g fill="#c15040"><path d="M924 410.500L928 406V408.500H932V406L936 410.500L932 415V412.500H928V415Z"/>
<path d="M473.500 727L478 731H476V735H478L473.500 739L469 735H471V731H469Z"/>
<path d="M924 727H931L929 729L933 733L935 731V738H928L930 736L926 732L924 734Z"/></g>
</svg>
<div class="menu" style="left:335px;top:22px;width:234px;height:433px"><div class="hl" style="left:2px;top:212px;width:229px;height:17px"></div><span class="t" style="left:28px;top:5px;letter-spacing:-0.036px;">Anlagerungen</span><i class="ar" style="left:222px;top:7.5px"></i><span class="t" style="left:28px;top:24px;letter-spacing:-0.064px;">Bild malen und zeichnen</span><i class="ar" style="left:222px;top:26.5px"></i><span class="t" style="left:28px;top:43px;letter-spacing:-0.048px;">Bildeffekte</span><i class="ar" style="left:222px;top:45.5px"></i><span class="t" style="left:28px;top:62px;letter-spacing:-0.073px;">Country Shading</span><i class="ar" style="left:222px;top:64.5px"></i><span class="t" style="left:28px;top:81px;letter-spacing:-0.512px;">Farbe</span><i class="ar" style="left:222px;top:83.5px"></i><span class="t" style="left:28px;top:100px;letter-spacing:-0.085px;">Füllung und Transparenz</span><i class="ar" style="left:222px;top:102.5px"></i><span class="t" style="left:28px;top:119px;letter-spacing:-0.336px;">Grat</span><i class="ar" style="left:222px;top:121.5px"></i><span class="t" style="left:28px;top:138px;letter-spacing:-0.009px;">Materialien</span><i class="ar" style="left:222px;top:140.5px"></i><span class="t" style="left:28px;top:157px;letter-spacing:0.268px;">Morphologie</span><i class="ar" style="left:222px;top:159.5px"></i><span class="t" style="left:28px;top:176px;letter-spacing:-0.298px;">Pixelwerkzeug</span><i class="ar" style="left:222px;top:178.5px"></i><span class="t" style="left:28px;top:195px;letter-spacing:-0.226px;">Raue Texturen</span><i class="ar" style="left:222px;top:197.5px"></i><span class="t" style="left:28px;top:214px;letter-spacing:-0.044px;">Schatten und Lichter</span><i class="ar" style="left:222px;top:216.5px"></i><span class="t" style="left:28px;top:233px;letter-spacing:-0.113px;">Streuung</span><i class="ar" style="left:222px;top:235.5px"></i><span class="t" style="left:28px;top:252px;letter-spacing:-0.457px;">Surfaces</span><i class="ar" style="left:222px;top:254.5px"></i><span class="t" style="left:28px;top:271px;letter-spacing:-0.066px;">Texturen</span><i class="ar" style="left:222px;top:273.5px"></i><span class="t" style="left:28px;top:290px;letter-spacing:-0.090px;">Überlagerungen</span><i class="ar" style="left:222px;top:292.5px"></i><span class="t" style="left:28px;top:309px;letter-spacing:-0.128px;">Übersteigerte Schattierungen</span><i class="ar" style="left:222px;top:311.5px"></i><span class="t" style="left:28px;top:328px;letter-spacing:-0.223px;">Unschärfe</span><i class="ar" style="left:222px;top:330.5px"></i><span class="t" style="left:28px;top:347px;letter-spacing:-0.370px;">Verzerren</span><i class="ar" style="left:222px;top:349.5px"></i><span class="t" style="left:28px;top:366px;letter-spacing:0.189px;">Wölbung</span><i class="ar" style="left:222px;top:368.5px"></i><div class="sep" style="left:5px;top:387px;width:226px"></div><span class="t" style="left:28px;top:394px;letter-spacing:-0.016px;">Filter<u>e</u>ditor...</span><span class="t" style="left:28px;top:415px;letter-spacing:-0.082px;">Filter entfernen</span><svg class="ic" style="left:5px;top:394px" width="16" height="16" viewBox="0 0 16 16"><defs><linearGradient id="fng" x1="0" y1="0" x2="1" y2="0"><stop offset="0" stop-color="#c8c8c8"/><stop offset=".5" stop-color="#f4f4f4"/><stop offset="1" stop-color="#a8a8a8"/></linearGradient></defs><path d="M1.200 3.800L6.500 10V14.300C6.500 15.200 9.500 15.200 9.500 14.300V10L14.800 3.800" fill="url(#fng)" stroke="#4e4e4e" stroke-width="1.100" stroke-linejoin="round"/><ellipse cx="8" cy="3.700" rx="6.900" ry="2.400" fill="#e2e2e2" stroke="#4e4e4e" stroke-width="1.100"/><ellipse cx="8" cy="4" rx="4.200" ry="1.100" fill="#3c3c3c"/></svg></div>
<div class="menu" style="left:569px;top:232px;width:174px;height:155px"><div class="hl" style="left:2px;top:2px;width:169px;height:17px"></div><span class="t" style="left:27px;top:4px;letter-spacing:-0.207px;">Abgesetzter Schatten...</span><span class="t" style="left:27px;top:23px;letter-spacing:-0.247px;">Einlage</span><span class="t" style="left:27px;top:42px;letter-spacing:-0.165px;">Erscheinung</span><span class="t" style="left:27px;top:61px;letter-spacing:-0.151px;">Glühen</span><span class="t" style="left:27px;top:80px;letter-spacing:0.005px;">Innen und Außen</span><span class="t" style="left:27px;top:99px;letter-spacing:-0.205px;">Inner Shadow</span><span class="t" style="left:27px;top:118px;letter-spacing:-0.155px;">Leuchtender Umriss</span><span class="t" style="left:27px;top:137px;letter-spacing:-0.039px;">Licht und Schatten</span></div>
</body></html>
